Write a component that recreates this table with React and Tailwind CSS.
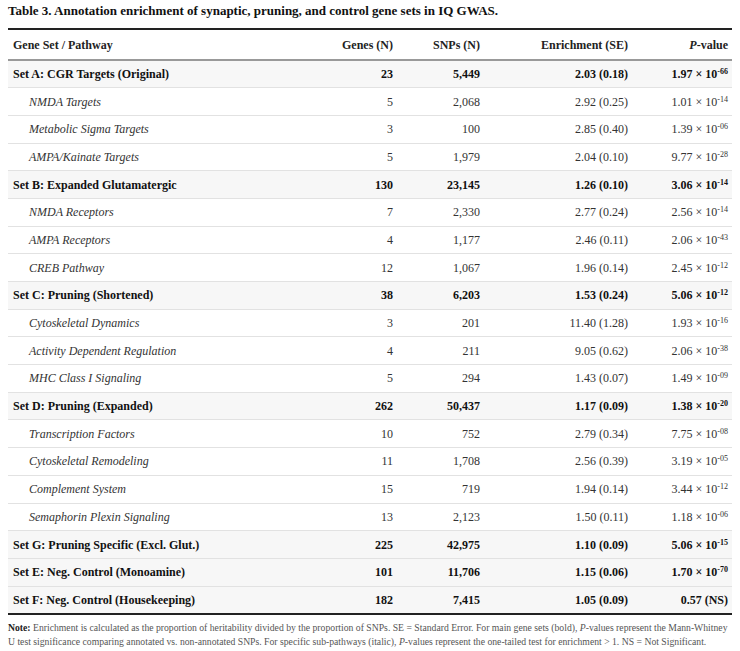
import React from "react";

const rows = [
  { name: "Set A: CGR Targets (Original)", genes: "23", snps: "5,449", enr: "2.03 (0.18)", p: ["1.97", "-66"], main: true },
  { name: "NMDA Targets", genes: "5", snps: "2,068", enr: "2.92 (0.25)", p: ["1.01", "-14"] },
  { name: "Metabolic Sigma Targets", genes: "3", snps: "100", enr: "2.85 (0.40)", p: ["1.39", "-06"] },
  { name: "AMPA/Kainate Targets", genes: "5", snps: "1,979", enr: "2.04 (0.10)", p: ["9.77", "-28"] },
  { name: "Set B: Expanded Glutamatergic", genes: "130", snps: "23,145", enr: "1.26 (0.10)", p: ["3.06", "-14"], main: true },
  { name: "NMDA Receptors", genes: "7", snps: "2,330", enr: "2.77 (0.24)", p: ["2.56", "-14"] },
  { name: "AMPA Receptors", genes: "4", snps: "1,177", enr: "2.46 (0.11)", p: ["2.06", "-43"] },
  { name: "CREB Pathway", genes: "12", snps: "1,067", enr: "1.96 (0.14)", p: ["2.45", "-12"] },
  { name: "Set C: Pruning (Shortened)", genes: "38", snps: "6,203", enr: "1.53 (0.24)", p: ["5.06", "-12"], main: true },
  { name: "Cytoskeletal Dynamics", genes: "3", snps: "201", enr: "11.40 (1.28)", p: ["1.93", "-16"] },
  { name: "Activity Dependent Regulation", genes: "4", snps: "211", enr: "9.05 (0.62)", p: ["2.06", "-38"] },
  { name: "MHC Class I Signaling", genes: "5", snps: "294", enr: "1.43 (0.07)", p: ["1.49", "-09"] },
  { name: "Set D: Pruning (Expanded)", genes: "262", snps: "50,437", enr: "1.17 (0.09)", p: ["1.38", "-20"], main: true },
  { name: "Transcription Factors", genes: "10", snps: "752", enr: "2.79 (0.34)", p: ["7.75", "-08"] },
  { name: "Cytoskeletal Remodeling", genes: "11", snps: "1,708", enr: "2.56 (0.39)", p: ["3.19", "-05"] },
  { name: "Complement System", genes: "15", snps: "719", enr: "1.94 (0.14)", p: ["3.44", "-12"] },
  { name: "Semaphorin Plexin Signaling", genes: "13", snps: "2,123", enr: "1.50 (0.11)", p: ["1.18", "-06"] },
  { name: "Set G: Pruning Specific (Excl. Glut.)", genes: "225", snps: "42,975", enr: "1.10 (0.09)", p: ["5.06", "-15"], main: true },
  { name: "Set E: Neg. Control (Monoamine)", genes: "101", snps: "11,706", enr: "1.15 (0.06)", p: ["1.70", "-70"], main: true },
  { name: "Set F: Neg. Control (Housekeeping)", genes: "182", snps: "7,415", enr: "1.05 (0.09)", p: null, main: true },
];

const PValue = ({ p }) => {
  if (!p) return <span>0.57 (NS)</span>;
  return (
    <span>
      {p[0]} × 10<sup className="text-[8px]">{p[1]}</sup>
    </span>
  );
};

export default function App() {
  return (
    <div className="w-[740px] h-[651px] bg-white px-2 pt-[2px] font-['Liberation_Serif',serif] text-[#222]">
      <h1 className="text-[13px] font-bold leading-[17px] text-[#111]">
        Table 3. Annotation enrichment of synaptic, pruning, and control gene sets in IQ GWAS.
      </h1>
      <table className="mt-[9px] w-[724px] table-fixed border-collapse text-[12px]">
        <colgroup>
          <col className="w-[300px]" />
          <col className="w-[90px]" />
          <col className="w-[87px]" />
          <col className="w-[148px]" />
          <col className="w-[99px]" />
        </colgroup>
        <thead>
          <tr className="h-[31px] border-t-2 border-b-2 border-t-[#222] border-b-[#999] font-bold">
            <th className="pl-[5px] text-left">Gene Set / Pathway</th>
            <th className="pr-[5px] text-right">Genes (N)</th>
            <th className="pr-[5px] text-right">SNPs (N)</th>
            <th className="pr-[5px] text-right">Enrichment (SE)</th>
            <th className="pr-[4px] text-right">
              <i>P</i>-value
            </th>
          </tr>
        </thead>
        <tbody className="border-b-2 border-b-[#222]">
          {rows.map((r) => (
            <tr
              key={r.name}
              className={`h-[27.7px] border-b border-[#e2e2e2] ${r.main ? "bg-[#f7f7f7] font-bold text-[#111]" : "text-[#333]"}`}
            >
              <td className={r.main ? "pl-[5px]" : "pl-[21px] italic"}>{r.name}</td>
              <td className="pr-[5px] text-right">{r.genes}</td>
              <td className="pr-[5px] text-right">{r.snps}</td>
              <td className="pr-[5px] text-right">{r.enr}</td>
              <td className="pr-[4px] text-right">
                <PValue p={r.p} />
              </td>
            </tr>
          ))}
        </tbody>
      </table>
      <p className="mt-[6px] text-[9.7px] leading-[14px] text-[#555]">
        <b className="text-[#222]">Note:</b> Enrichment is calculated as the proportion of heritability divided by the proportion of SNPs. SE = Standard Error. For main gene sets (bold), <i>P</i>-values represent the Mann-Whitney U test significance comparing annotated vs. non-annotated SNPs. For specific sub-pathways (italic), <i>P</i>-values represent the one-tailed test for enrichment &gt; 1. NS = Not Significant.
      </p>
    </div>
  );
}
